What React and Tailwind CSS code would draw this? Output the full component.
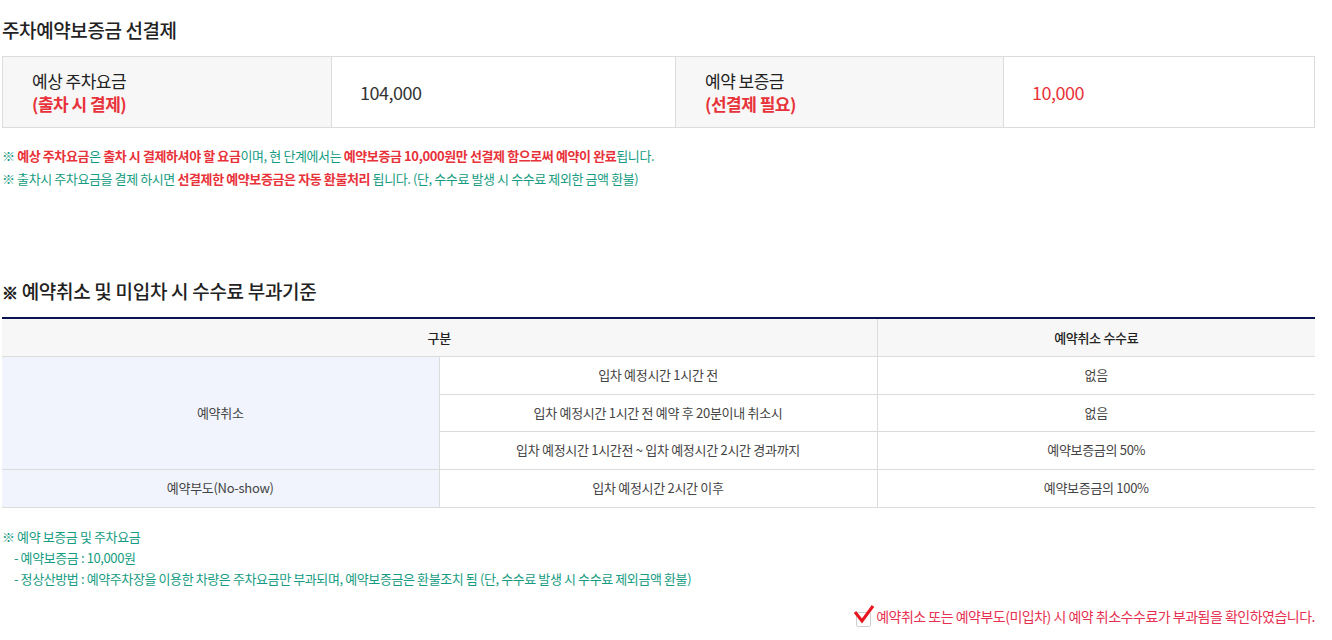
import React from "react";

const F = { fontFamily: '"Noto Sans CJK KR", "Noto Sans", sans-serif' };

export default function App() {
  const red = "text-[#e8323a]";
  const teal = "text-[#169c82]";
  return (
    <div className="w-[1332px] h-[640px] bg-white text-[#222] overflow-hidden" style={F}>
      <div className="ml-[2px] w-[1313px]">
        <h2 className="pt-[17px] text-[19px] leading-[26px] font-medium tracking-[-0.4px] text-[#222]">주차예약보증금 선결제</h2>

        <div className="mt-[13px] grid grid-cols-[328px_344px_328px_1fr] border border-[#dcdcdc] h-[72px]">
          <div className="bg-[#f7f7f7] pl-[29px] flex flex-col justify-center text-[17px] leading-[23px] tracking-[-0.5px]">
            <span className="text-[#222]">예상 주차요금</span>
            <span className={`${red} font-bold`}>(출차 시 결제)</span>
          </div>
          <div className="border-l border-[#dcdcdc] pl-[28px] flex items-center text-[18px] text-[#333] tracking-[-0.5px]">104,000</div>
          <div className="border-l border-[#dcdcdc] bg-[#f7f7f7] pl-[29px] flex flex-col justify-center text-[17px] leading-[23px] tracking-[-0.5px]">
            <span className="text-[#222]">예약 보증금</span>
            <span className={`${red} font-bold`}>(선결제 필요)</span>
          </div>
          <div className="border-l border-[#dcdcdc] pl-[28px] flex items-center text-[18px] text-[#e8323a] tracking-[-0.5px]">10,000</div>
        </div>

        <div className={`mt-[16px] text-[13px] leading-[23px] tracking-[-0.4px] ${teal}`}>
          <p>
            ※ <b className={red}>예상 주차요금</b>은 <b className={red}>출차 시 결제하셔야 할 요금</b>이며, 현 단계에서는 <b className={red}>예약보증금 10,000원만 선결제 함으로써 예약이 완료</b>됩니다.
          </p>
          <p>
            ※ 출차시 주차요금을 결제 하시면 <b className={red}>선결제한 예약보증금은 자동 환불처리</b> 됩니다. (단, 수수료 발생 시 수수료 제외한 금액 환불)
          </p>
        </div>

        <h3 className="mt-[89px] text-[19px] leading-[24px] font-medium tracking-[-0.3px] text-[#222]">
          <span className="text-[16px] font-black [-webkit-text-stroke:0.8px_#222]">※</span> 예약취소 및 미입차 시 수수료 부과기준
        </h3>

        <table className="mt-[13px] w-full border-collapse border-t-2 border-[#0b1450] text-[13px] text-[#444] tracking-[-0.3px] table-fixed">
          <colgroup>
            <col className="w-[437px]" />
            <col className="w-[438px]" />
            <col />
          </colgroup>
          <thead>
            <tr className="h-[38px] bg-[#f7f7f7] text-[#222] font-medium">
              <th colSpan={2} className="font-medium border-b border-[#dcdcdc]">구분</th>
              <th className="font-medium border-b border-l border-[#dcdcdc]">예약취소 수수료</th>
            </tr>
          </thead>
          <tbody className="text-center">
            <tr className="h-[38px]">
              <td rowSpan={3} className="bg-[#f1f4fc] border-b border-[#dcdcdc]">예약취소</td>
              <td className="border-b border-l border-[#dcdcdc]">입차 예정시간 1시간 전</td>
              <td className="border-b border-l border-[#dcdcdc]">없음</td>
            </tr>
            <tr className="h-[37px]">
              <td className="border-b border-l border-[#dcdcdc]">입차 예정시간 1시간 전 예약 후 20분이내 취소시</td>
              <td className="border-b border-l border-[#dcdcdc]">없음</td>
            </tr>
            <tr className="h-[38px]">
              <td className="border-b border-l border-[#dcdcdc]">입차 예정시간 1시간전 ~ 입차 예정시간 2시간 경과까지</td>
              <td className="border-b border-l border-[#dcdcdc]">예약보증금의 50%</td>
            </tr>
            <tr className="h-[38px]">
              <td className="bg-[#f1f4fc] border-b border-[#dcdcdc]">예약부도(No-show)</td>
              <td className="border-b border-l border-[#dcdcdc]">입차 예정시간 2시간 이후</td>
              <td className="border-b border-l border-[#dcdcdc]">예약보증금의 100%</td>
            </tr>
          </tbody>
        </table>

        <div className={`mt-[18px] text-[13px] leading-[21px] tracking-[-0.4px] ${teal}`}>
          <p>※ 예약 보증금 및 주차요금</p>
          <p className="pl-[12px]">- 예약보증금 : 10,000원</p>
          <p className="pl-[12px]">- 정상산방법 : 예약주차장을 이용한 차량은 주차요금만 부과되며, 예약보증금은 환불조치 됨 (단, 수수료 발생 시 수수료 제외금액 환불)</p>
        </div>

        <div className="mt-[17px] flex justify-end items-center">
          <label className="flex items-center gap-[5px] text-[14px] text-[#e6304f] tracking-[-0.5px]">
            <span className="relative inline-block w-[15px] h-[15px] mt-[6px] border border-[#cfcfcf] rounded-[2px] bg-white">
              <svg className="absolute left-[-4px] top-[-10px]" width="22" height="22" viewBox="0 0 22 22">
                <path d="M2 9 L9 18 L20 3" fill="none" stroke="#e8161e" strokeWidth="3" strokeLinejoin="miter" />
              </svg>
            </span>
            예약취소 또는 예약부도(미입차) 시 예약 취소수수료가 부과됨을 확인하였습니다.
          </label>
        </div>
      </div>
    </div>
  );
}
